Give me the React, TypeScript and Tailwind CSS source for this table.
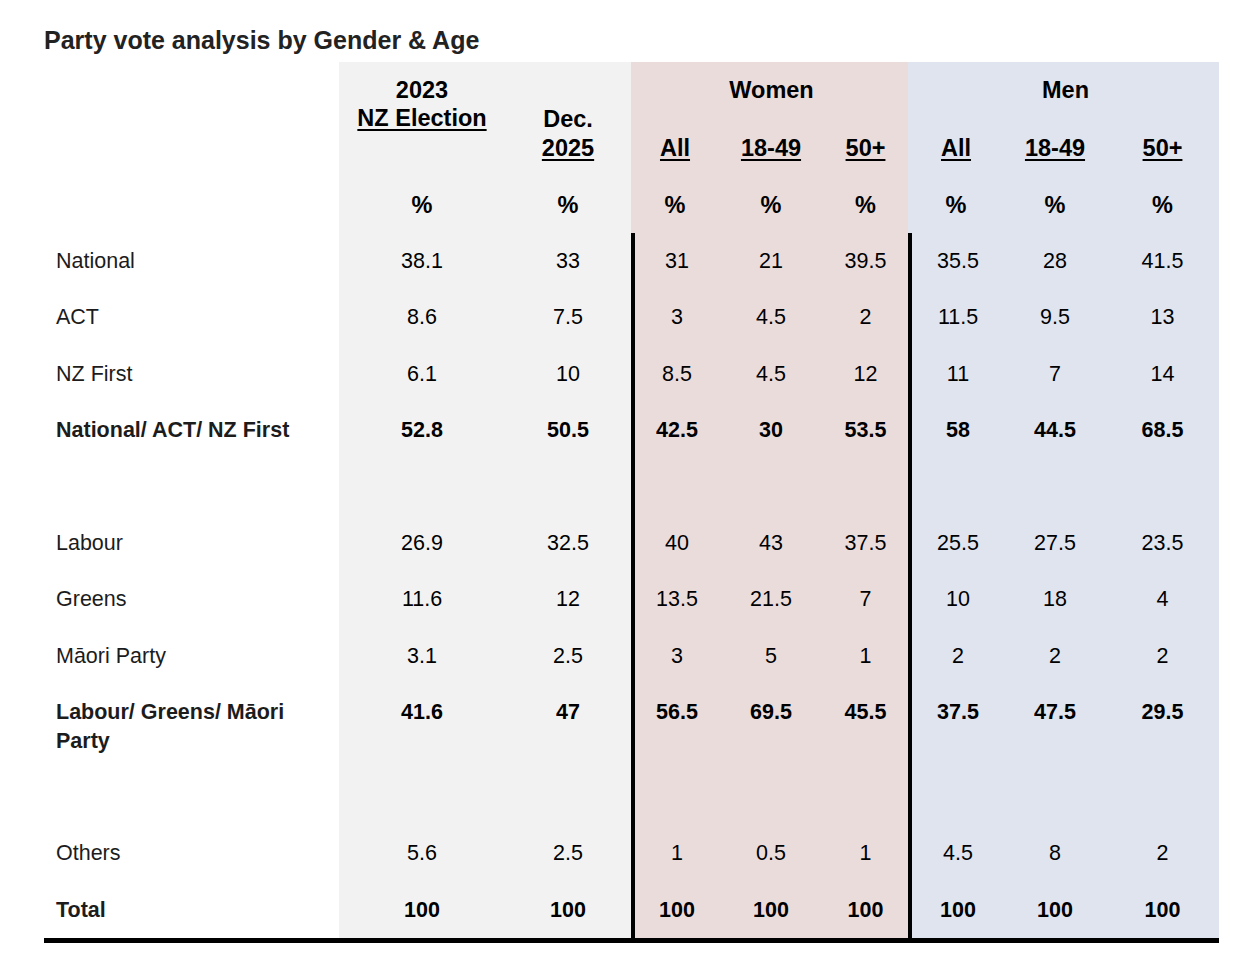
const font = { fontFamily: '"Liberation Sans", Arial, sans-serif' };

type Row = {
  label: string;
  values: string[];
  bold?: boolean;
};

const rows: (Row | null)[] = [
  { label: "National", values: ["38.1", "33", "31", "21", "39.5", "35.5", "28", "41.5"] },
  { label: "ACT", values: ["8.6", "7.5", "3", "4.5", "2", "11.5", "9.5", "13"] },
  { label: "NZ First", values: ["6.1", "10", "8.5", "4.5", "12", "11", "7", "14"] },
  { label: "National/ ACT/ NZ First", values: ["52.8", "50.5", "42.5", "30", "53.5", "58", "44.5", "68.5"], bold: true },
  null,
  { label: "Labour", values: ["26.9", "32.5", "40", "43", "37.5", "25.5", "27.5", "23.5"] },
  { label: "Greens", values: ["11.6", "12", "13.5", "21.5", "7", "10", "18", "4"] },
  { label: "Māori Party", values: ["3.1", "2.5", "3", "5", "1", "2", "2", "2"] },
  { label: "Labour/ Greens/ Māori Party", values: ["41.6", "47", "56.5", "69.5", "45.5", "37.5", "47.5", "29.5"], bold: true },
  null,
  { label: "Others", values: ["5.6", "2.5", "1", "0.5", "1", "4.5", "8", "2"] },
  { label: "Total", values: ["100", "100", "100", "100", "100", "100", "100", "100"], bold: true },
];

// background per value column
const colBg = [
  "bg-[#f2f2f2]",
  "bg-[#f2f2f2]",
  "bg-[#ebdcdc]",
  "bg-[#ebdcdc]",
  "bg-[#ebdcdc]",
  "bg-[#dfe4ef]",
  "bg-[#dfe4ef]",
  "bg-[#dfe4ef]",
];

function dividerFor(i: number) {
  return i === 2 || i === 5 ? "border-l-4 border-black" : "";
}

function HeaderCell({ i, children, className = "" }: { i: number; children?: React.ReactNode; className?: string }) {
  return <div className={`${colBg[i]} text-center ${className}`}>{children}</div>;
}

export default function App() {
  return (
    <div className="min-h-screen bg-white pt-[25px] text-black" style={font}>
      <h1 className="ml-[44px] text-[25px] font-bold leading-[30px] text-[#222]">
        Party vote analysis by Gender &amp; Age
      </h1>

      <div className="ml-[44px] mt-[7px] grid w-[1175px] grid-cols-[295px_166px_126px_88px_104px_85px_96px_102px_113px] border-b-[5px] border-black text-[23.5px] font-bold leading-[28px]">
        {/* header row 1 */}
        <div className="h-[42px]" />
        <HeaderCell i={0} className="pt-[14px]">2023</HeaderCell>
        <HeaderCell i={1} />
        <div className="col-span-3 bg-[#ebdcdc] pt-[14px] pl-1 text-center">Women</div>
        <div className="col-span-3 bg-[#dfe4ef] pt-[14px] pl-1 text-center">Men</div>

        {/* header row 2 */}
        <div className="h-[28px]" />
        <HeaderCell i={0}>
          <span className="underline underline-offset-[3px]">NZ Election</span>
        </HeaderCell>
        <HeaderCell i={1} className="pt-px">Dec.</HeaderCell>
        {[2, 3, 4, 5, 6, 7].map((i) => (
          <HeaderCell key={i} i={i} />
        ))}

        {/* header row 3 */}
        <div className="h-[44px]" />
        <HeaderCell i={0} />
        <HeaderCell i={1} className="pt-px">
          <span className="underline underline-offset-[3px]">2025</span>
        </HeaderCell>
        {["All", "18-49", "50+", "All", "18-49", "50+"].map((t, k) => (
          <HeaderCell key={k} i={k + 2} className="pt-px">
            <span className="underline underline-offset-[3px]">{t}</span>
          </HeaderCell>
        ))}

        {/* % row */}
        <div className="h-[56px]" />
        {colBg.map((_, i) => (
          <HeaderCell key={i} i={i} className="py-[14px]">
            %
          </HeaderCell>
        ))}

        {/* data rows */}
        {rows.map((row, r) => (
          <DataRow key={r} row={row} />
        ))}
      </div>
    </div>
  );
}

function DataRow({ row }: { row: Row | null }) {
  const weight = row?.bold ? "font-bold" : "font-normal";
  return (
    <>
      <div className={`py-[14px] pl-3 pr-3 text-[21.5px] leading-[28.4px] text-[#1c1c1c] ${weight}`}>
        {row ? row.label : "\u00a0"}
      </div>
      {colBg.map((bg, i) => (
        <div
          key={i}
          className={`${bg} ${dividerFor(i)} pt-[14px] pb-[14px] text-center text-[21.5px] leading-[28.4px] ${weight}`}
        >
          {row ? row.values[i] : ""}
        </div>
      ))}
    </>
  );
}
